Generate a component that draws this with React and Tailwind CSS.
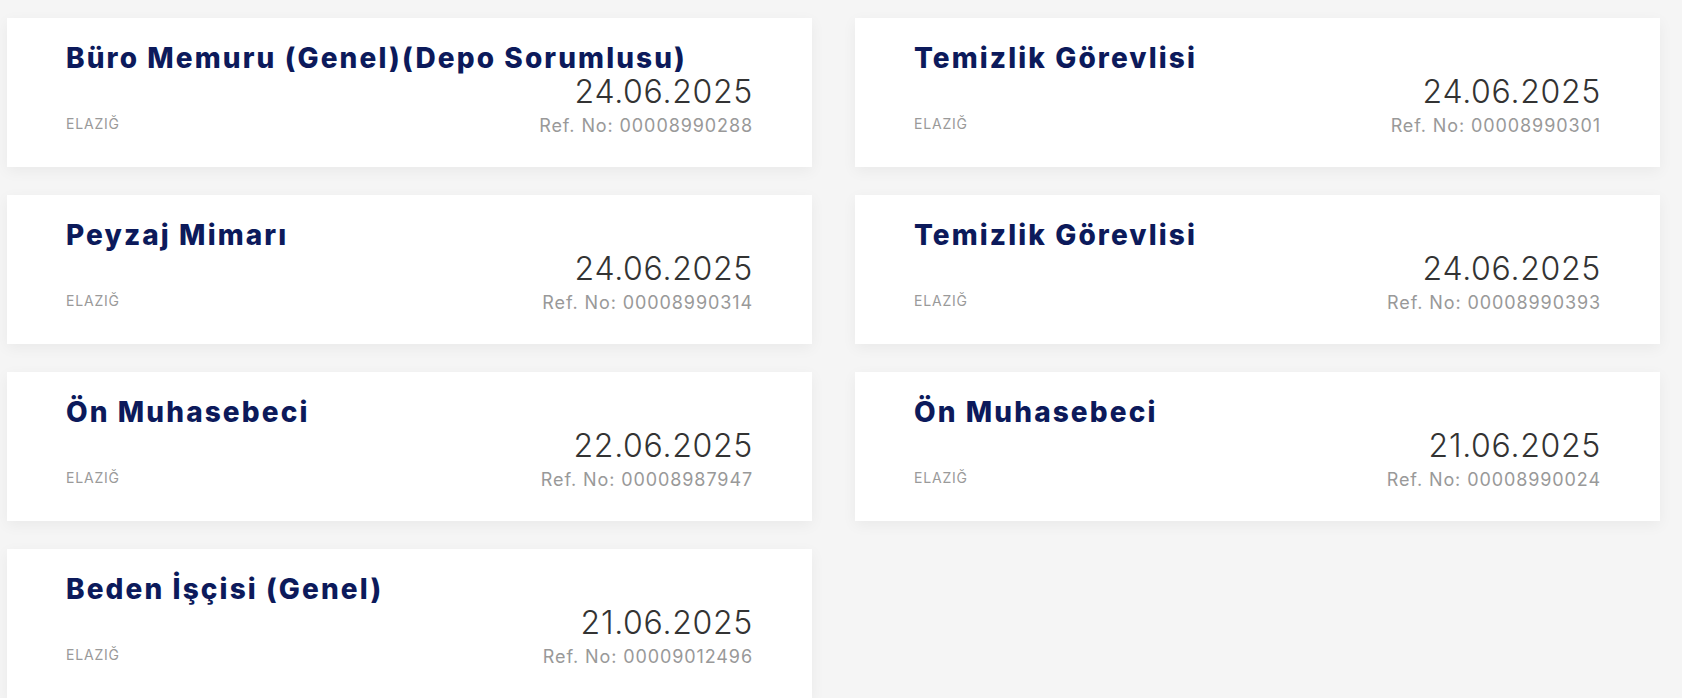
import React from 'react';

const jobs = [
    { title: 'Büro Memuru (Genel)(Depo Sorumlusu)', city: 'ELAZIĞ', date: '24.06.2025', ref: '00008990288' },
    { title: 'Temizlik Görevlisi', city: 'ELAZIĞ', date: '24.06.2025', ref: '00008990301' },
    { title: 'Peyzaj Mimarı', city: 'ELAZIĞ', date: '24.06.2025', ref: '00008990314' },
    { title: 'Temizlik Görevlisi', city: 'ELAZIĞ', date: '24.06.2025', ref: '00008990393' },
    { title: 'Ön Muhasebeci', city: 'ELAZIĞ', date: '22.06.2025', ref: '00008987947' },
    { title: 'Ön Muhasebeci', city: 'ELAZIĞ', date: '21.06.2025', ref: '00008990024' },
    { title: 'Beden İşçisi (Genel)', city: 'ELAZIĞ', date: '21.06.2025', ref: '00009012496' },
];

function JobCard({ job }) {
    return (
        <div className="h-[149px] bg-white shadow-[0_4px_14px_rgba(0,0,0,0.05)] px-[59px] pt-[23px] flex flex-col">
            {/* Title */}
            <h2 className="text-[28px] leading-[35px] font-extrabold tracking-[2.1px] text-[#0c1a5b] whitespace-nowrap">
                {job.title}
            </h2>

            {/* City + date / ref */}
            <div className="flex items-end justify-between mt-[-4px]">
                <span className="text-[14px] leading-[20px] tracking-[0.8px] text-[#9a9a9a] uppercase mb-[6px]">{job.city}</span>
                <div className="flex flex-col items-end">
                    <span className="text-[32px] leading-[40px] font-light tracking-[0.7px] text-[#333333]">{job.date}</span>
                    <span className="text-[18px] leading-[28px] tracking-[0.9px] text-[#999999]">Ref. No: {job.ref}</span>
                </div>
            </div>
        </div>
    );
}

export default function App() {
    return (
        <div
            className="min-h-screen bg-[#f5f5f5] pl-[7px] pr-[22px] pt-[18px]"
            style={{ fontFamily: 'Inter, "Open Sans", sans-serif' }}
        >
            <div className="grid grid-cols-2 gap-x-[43px] gap-y-[28px]">
                {jobs.map((job, i) => (
                    <JobCard key={i} job={job} />
                ))}
            </div>
        </div>
    );
}
